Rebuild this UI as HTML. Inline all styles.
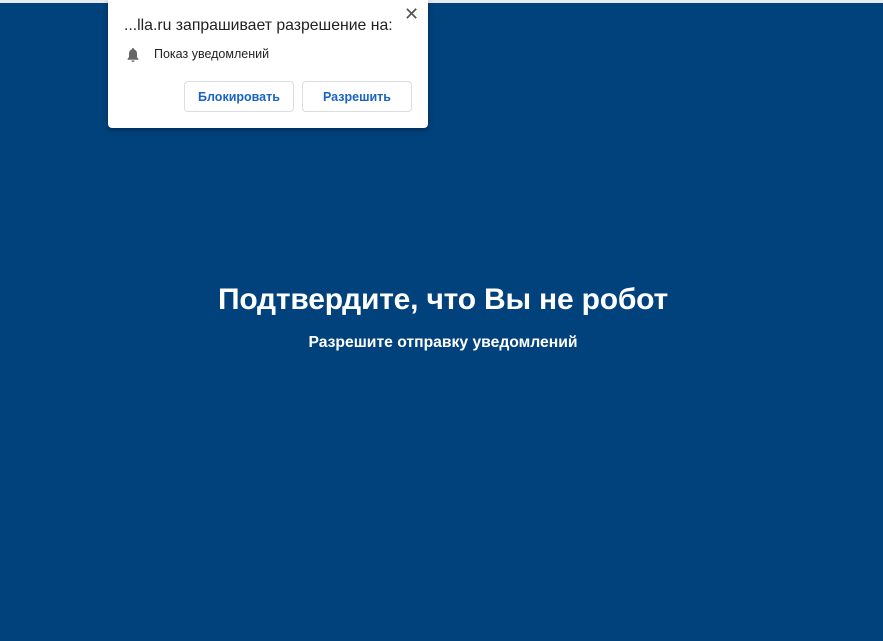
<!DOCTYPE html>
<html><head><meta charset="utf-8"><style>
body{margin:0;width:883px;height:641px;background:#01427c;overflow:hidden;font-family:"Liberation Sans","Noto Sans CJK SC",sans-serif;position:relative}
.top{position:absolute;left:0;top:0;width:883px;height:3px;background:#e8ecf0}
.pop{position:absolute;left:108px;top:0;width:320px;height:128px;background:#fff;border-radius:0 0 4px 4px;box-shadow:0 2px 6px rgba(0,0,0,.35)}
.t{position:absolute;left:16px;top:17px;font-size:15.8px;color:#222}
.x{position:absolute;left:296px;top:4px;font-size:18px;color:#555}
.b{position:absolute;left:18px;top:47px}
.p{position:absolute;left:46px;top:47px;font-size:12.5px;color:#222}
.btn{position:absolute;top:81px;width:110px;height:31px;border:1px solid #dadce0;border-radius:4px;box-sizing:border-box;color:#1a63c4;font-size:12.5px;font-weight:bold;text-align:center;line-height:30px}
h1{position:absolute;left:0;width:886px;top:283px;margin:0;text-align:center;color:#fff;font-size:30px;font-weight:bold;letter-spacing:-0.2px}
h2{position:absolute;left:0;width:886px;top:334px;margin:0;text-align:center;color:#fff;font-size:15.7px;font-weight:bold}
</style></head><body>
<div class="top"></div>
<div class="pop">
<div class="t">...lla.ru запрашивает разрешение на:</div>
<div class="x">✕</div>
<svg class="b" width="14" height="16" viewBox="0 0 14 16"><path d="M7 1c-.6 0-1 .4-1 1v.4C4 3 3 4.6 3 6.5V10l-1.5 2v.8h11V12L11 10V6.5C11 4.6 10 3 8 2.4V2c0-.6-.4-1-1-1zM5.5 13.5a1.5 1.5 0 0 0 3 0z" fill="#666"/></svg>
<div class="p">Показ уведомлений</div>
<div class="btn" style="left:76px">Блокировать</div>
<div class="btn" style="left:194px">Разрешить</div>
</div>
<h1>Подтвердите, что Вы не робот</h1>
<h2>Разрешите отправку уведомлений</h2>
</body></html>
